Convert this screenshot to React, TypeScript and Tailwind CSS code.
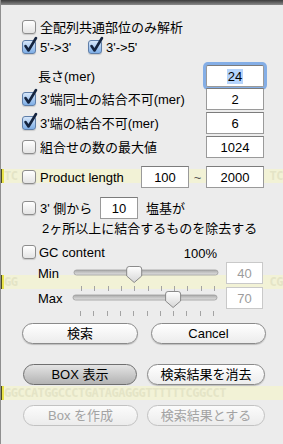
import React from "react";

function Check({ on = false }: { on?: boolean }) {
  return (
    <span className="relative inline-block w-[14px] h-[14px] shrink-0">
      <span
        className={
          on
            ? "absolute inset-0 rounded-[3px] border border-[#5f7ea8] bg-gradient-to-b from-[#d7e7fa] to-[#7eaee6] shadow-[0_1px_1px_rgba(0,0,0,0.15)]"
            : "absolute inset-0 rounded-[3px] border border-[#8d8d8d] bg-gradient-to-b from-[#ffffff] to-[#e4e4e4] shadow-[0_1px_1px_rgba(0,0,0,0.15)]"
        }
      />
      {on && (
        <svg className="absolute left-[1px] top-[-3px] overflow-visible" width="15" height="16" viewBox="0 0 15 16">
          <path d="M2.5 9 L5.5 13.5 L13 1" fill="none" stroke="#14243f" strokeWidth="2.6" strokeLinecap="round" strokeLinejoin="round" />
        </svg>
      )}
    </span>
  );
}

function Field({ v, w, dim = false, focus = false }: { v: string; w: string; dim?: boolean; focus?: boolean }) {
  return (
    <span
      className={
        "flex items-center justify-center h-[22px] shrink-0 bg-white border text-[13px] " +
        w +
        (dim ? " border-[#c9c9c9] text-[#9c9c9c]" : " border-[#9a9a9a] border-t-[#7c7c7c] text-black") +
        (focus ? " shadow-[0_0_0_3px_#84aee6] rounded-[2px] border-[#6d95cf]" : "")
      }
    >
      {focus ? <span className="bg-[#b6d4fb] px-[1px] leading-[15px]">{v}</span> : v}
    </span>
  );
}

function Slider({ value }: { value: number }) {
  const cx = 8 + (value / 100) * 133;
  const ticks = Array.from({ length: 11 }, (_, i) => 8 + i * 13.3);
  return (
    <svg width="146" height="22" viewBox="0 0 146 22" className="overflow-visible shrink-0">
      <defs>
        <linearGradient id="trk" x1="0" y1="0" x2="0" y2="1">
          <stop offset="0" stopColor="#a9a9a9" />
          <stop offset="1" stopColor="#e2e2e2" />
        </linearGradient>
        <linearGradient id="thm" x1="0" y1="0" x2="0" y2="1">
          <stop offset="0" stopColor="#ffffff" />
          <stop offset="1" stopColor="#d6d6d6" />
        </linearGradient>
      </defs>
      <rect x="1" y="8" width="144" height="5" rx="2.5" fill="url(#trk)" stroke="#9d9d9d" strokeWidth="0.8" />
      {ticks.map((t, i) => (
        <rect key={i} x={Math.round(t)} y="24" width="1" height="5" fill="#a3a3a3" />
      ))}
      <path
        d={`M${cx - 7.5} 7 Q${cx - 7.5} 4.5 ${cx - 5} 4.5 H${cx + 5} Q${cx + 7.5} 4.5 ${cx + 7.5} 7 V14 L${cx} 20.5 L${cx - 7.5} 14 Z`}
        fill="url(#thm)"
        stroke="#7f7f7f"
        strokeWidth="0.9"
      />
    </svg>
  );
}

function Btn({ label, w, kind = "normal" }: { label: string; w: string; kind?: "normal" | "pressed" | "disabled" }) {
  const cls =
    kind === "pressed"
      ? "border-[#6f6f6f] bg-gradient-to-b from-[#e4e4e4] to-[#b3b3b3] text-black"
      : kind === "disabled"
      ? "border-[#c2c2c2] bg-gradient-to-b from-[#fbfbfb] to-[#ececec] text-[#a3a3a3]"
      : "border-[#8a8a8a] bg-gradient-to-b from-[#ffffff] to-[#ececec] text-black shadow-[0_1px_1px_rgba(0,0,0,0.2)]";
  return (
    <span className={"flex items-center justify-center h-[21px] rounded-full border text-[13px] shrink-0 " + w + " " + cls}>
      {label}
    </span>
  );
}

function Band({ top, left, right }: { top: string; left?: string; right?: string }) {
  return (
    <div className={"absolute left-0 right-0 h-[14px] bg-[#f2f2d6] overflow-hidden flex items-center " + top}>
      <span className="w-[3px] h-[14px] bg-[#e8e24a] border-l border-[#4a4a20] shrink-0" />
      <span className="[font-family:DejaVu_Sans_Mono,monospace] text-[12px] font-bold tracking-[-0.5px] text-[#e4e4c6] whitespace-nowrap">
        {left}
      </span>
      <span className="ml-auto [font-family:DejaVu_Sans_Mono,monospace] text-[12px] font-bold tracking-[-0.5px] text-[#e4e4c6] whitespace-nowrap">
        {right}
      </span>
    </div>
  );
}

export default function App() {
  return (
    <div className="relative w-[283px] h-[444px] overflow-hidden bg-[#ececec] border-l border-[#8f8f8f] font-['Liberation_Sans','Noto_Sans_CJK_JP',sans-serif] text-[13px] text-black leading-none">
      <div className="h-[5px] bg-gradient-to-b from-[#3d3d3d] to-[#8c8c8c]" />
      <Band top="top-[169px]" left="TC" right="TC" />
      <Band top="top-[275px]" left="GG" right="CG" />
      <Band top="top-[386px]" left="GGCCATGGCCCTGATAGAGGGTTTTTTCGGCCT" />

      <div className="relative pl-[21px] pr-[19px]">
        <div className="mt-[13px] h-[18px] flex items-center">
          <Check />
          <span className="ml-[4px]">全配列共通部位のみ解析</span>
        </div>
        <div className="mt-[2px] h-[18px] flex items-center">
          <Check on />
          <span className="ml-[4px] w-[48px]">5'-&gt;3'</span>
          <Check on />
          <span className="ml-[4px]">3'-&gt;5'</span>
        </div>
        <div className="mt-[9px] h-[22px] flex items-center justify-between">
          <span className="pl-[16px]">長さ(mer)</span>
          <Field v="24" w="w-[58px]" focus />
        </div>
        <div className="mt-[1px] h-[22px] flex items-center justify-between">
          <span className="flex items-center">
            <Check on />
            <span className="ml-[4px]">3'端同士の結合不可(mer)</span>
          </span>
          <Field v="2" w="w-[58px]" />
        </div>
        <div className="mt-[2px] h-[22px] flex items-center justify-between">
          <span className="flex items-center">
            <Check on />
            <span className="ml-[4px]">3'端の結合不可(mer)</span>
          </span>
          <Field v="6" w="w-[58px]" />
        </div>
        <div className="mt-[2px] h-[22px] flex items-center justify-between">
          <span className="flex items-center">
            <Check />
            <span className="ml-[4px]">組合せの数の最大値</span>
          </span>
          <Field v="1024" w="w-[58px]" />
        </div>
        <div className="mt-[8px] h-[22px] flex items-center">
          <Check />
          <span className="ml-[4px] whitespace-nowrap">Product length</span>
          <span className="ml-auto flex items-center">
            <Field v="100" w="w-[48px]" />
            <span className="w-[17px] text-center text-[#555]">~</span>
            <Field v="2000" w="w-[58px]" />
          </span>
        </div>
        <div className="mt-[9px] h-[22px] flex items-center">
          <Check />
          <span className="ml-[4px] w-[60px]">3' 側から</span>
          <Field v="10" w="w-[38px]" />
          <span className="ml-[8px]">塩基が</span>
        </div>
        <div className="mt-[1px] h-[16px] flex items-center pl-[20px]">
          2ヶ所以上に結合するものを除去する
        </div>
        <div className="mt-[8px] h-[16px] flex items-center">
          <Check />
          <span className="ml-[3px]">GC content</span>
          <span className="ml-auto mr-[47px] pt-[3px]">100%</span>
        </div>
        <div className="mt-[2px] h-[22px] flex items-center">
          <span className="w-[51px] pl-[16px]">Min</span>
          <Slider value={40} />
          <span className="ml-auto mr-[1px]">
            <Field v="40" w="w-[37px]" dim />
          </span>
        </div>
        <div className="mt-[3px] h-[22px] flex items-center">
          <span className="w-[50px] pl-[16px]">Max</span>
          <Slider value={70} />
          <span className="ml-auto mr-[1px]">
            <Field v="70" w="w-[37px]" dim />
          </span>
        </div>
        <div className="mt-[14px] flex items-center">
          <Btn label="検索" w="w-[116px]" />
          <span className="ml-[13px]">
            <Btn label="Cancel" w="w-[115px]" />
          </span>
        </div>
        <div className="mt-[20px] flex items-center pl-[1px]">
          <Btn label="BOX 表示" w="w-[114px]" kind="pressed" />
          <span className="ml-[10px]">
            <Btn label="検索結果を消去" w="w-[118px]" />
          </span>
        </div>
        <div className="mt-[20px] flex items-center pl-[1px]">
          <Btn label="Box を作成" w="w-[115px]" kind="disabled" />
          <span className="ml-[9px]">
            <Btn label="検索結果とする" w="w-[118px]" kind="disabled" />
          </span>
        </div>
      </div>
    </div>
  );
}
